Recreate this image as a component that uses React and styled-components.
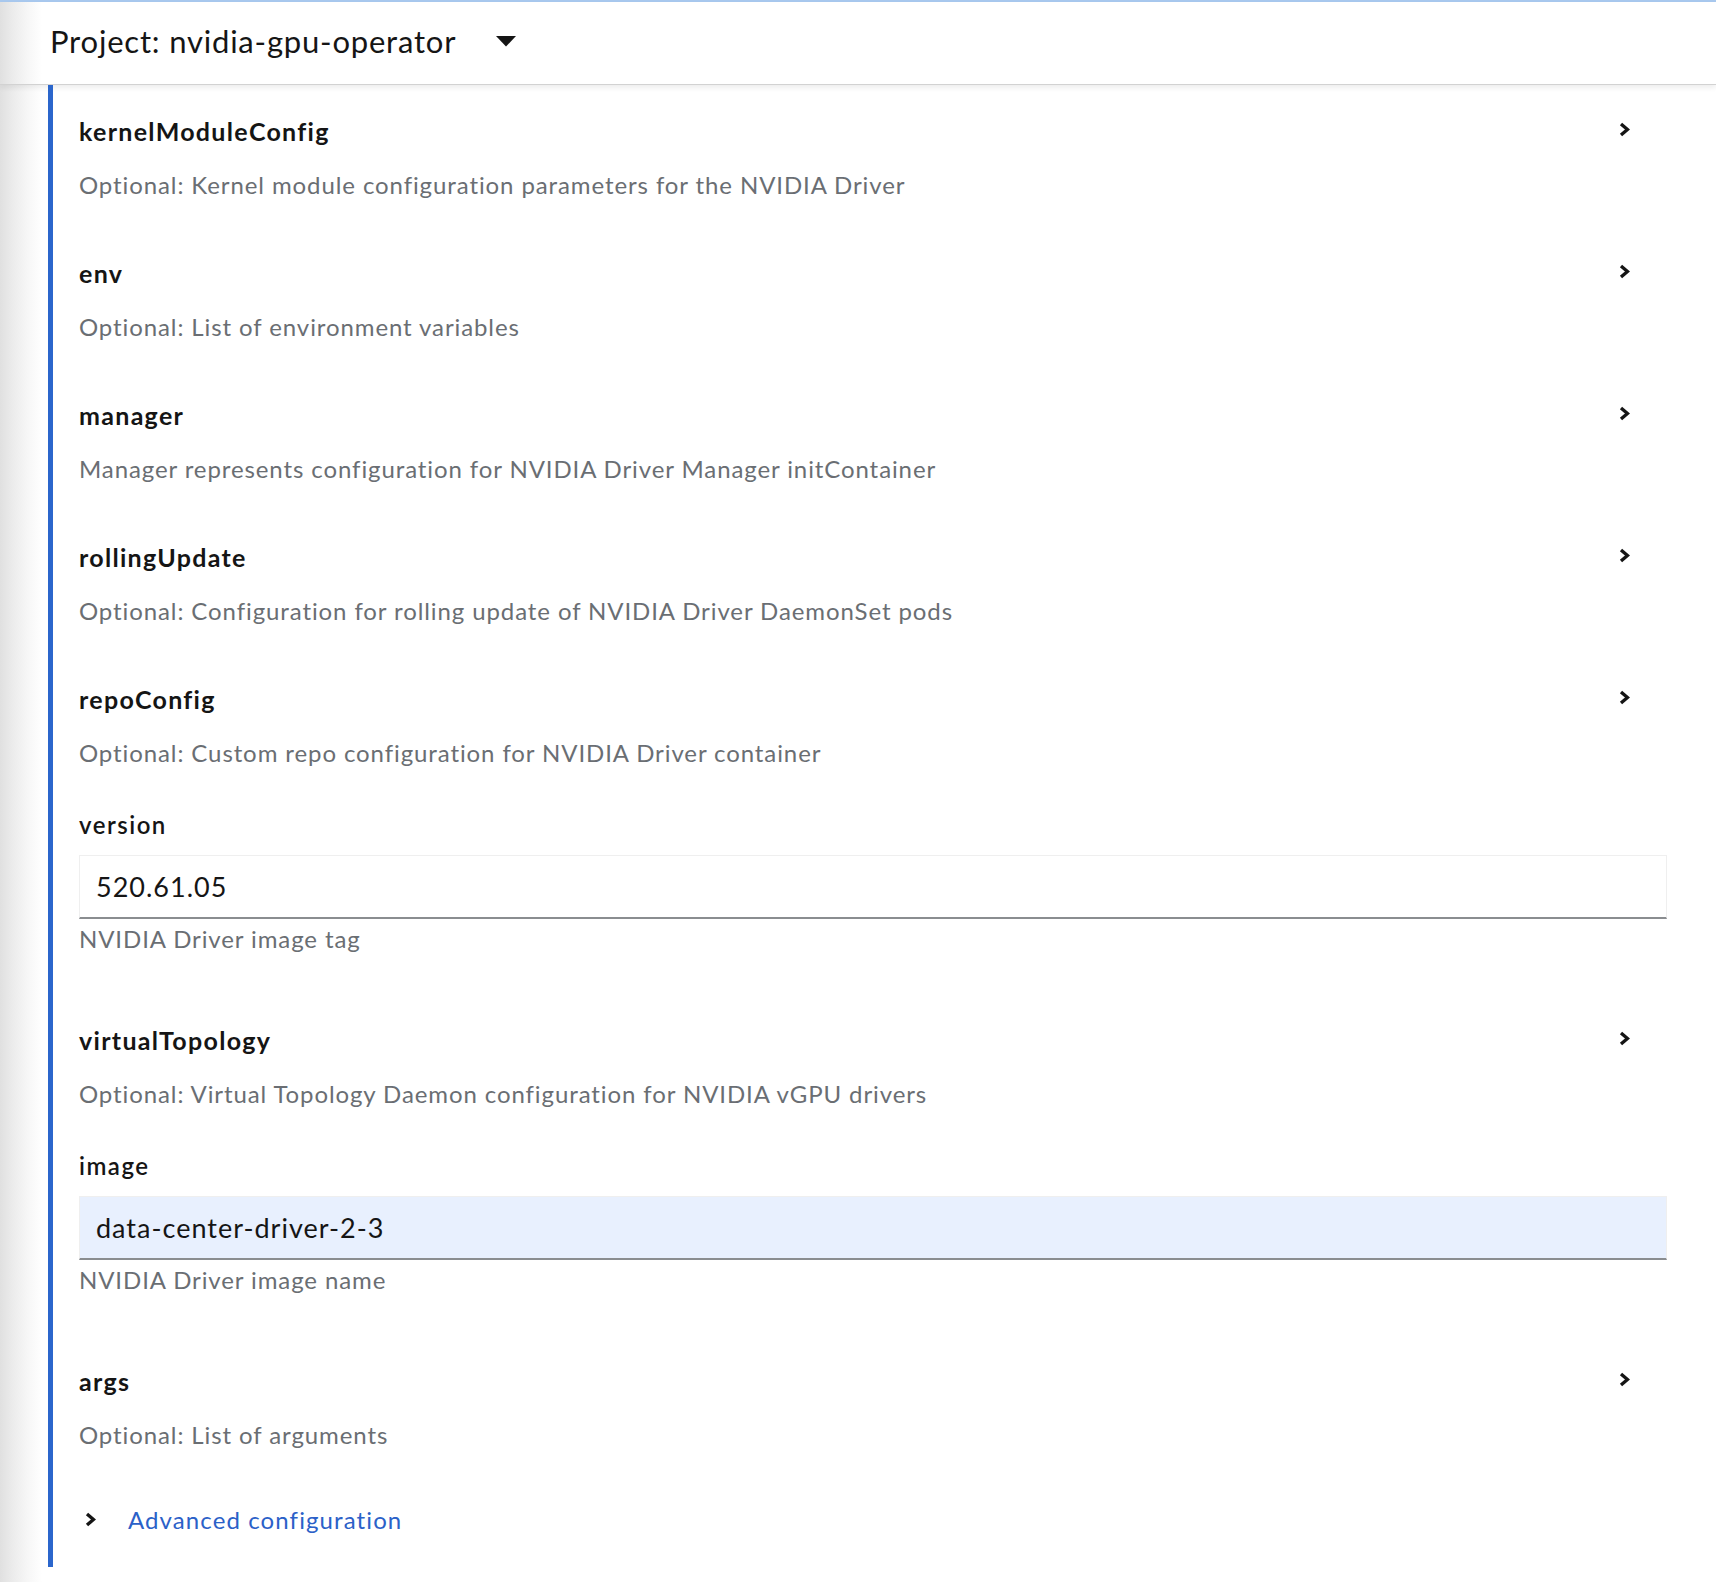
import React from "react";
import styled, { createGlobalStyle } from "styled-components";

const GlobalStyle = createGlobalStyle`
  html, body {
    margin: 0;
    padding: 0;
    background: #fff;
  }
  body {
    font-family: Lato, "Liberation Sans", sans-serif;
    color: #151515;
  }
`;

const fields = [
  { kind: "expand", name: "kernelModuleConfig", desc: "Optional: Kernel module configuration parameters for the NVIDIA Driver" },
  { kind: "expand", name: "env", desc: "Optional: List of environment variables" },
  { kind: "expand", name: "manager", desc: "Manager represents configuration for NVIDIA Driver Manager initContainer" },
  { kind: "expand", name: "rollingUpdate", desc: "Optional: Configuration for rolling update of NVIDIA Driver DaemonSet pods" },
  { kind: "expand", name: "repoConfig", desc: "Optional: Custom repo configuration for NVIDIA Driver container" },
  { kind: "input", name: "version", value: "520.61.05", help: "NVIDIA Driver image tag" },
  { kind: "expand", name: "virtualTopology", desc: "Optional: Virtual Topology Daemon configuration for NVIDIA vGPU drivers" },
  { kind: "input", name: "image", value: "data-center-driver-2-3", help: "NVIDIA Driver image name", autofill: true },
  { kind: "expand", name: "args", desc: "Optional: List of arguments" },
];

function Chevron() {
  return (
    <svg width="11" height="15" viewBox="0 0 11 15">
      <path d="M2 2 L8.5 7.5 L2 13" fill="none" stroke="#151515" strokeWidth="3.4" />
    </svg>
  );
}

function App() {
  return (
    <Page>
      <GlobalStyle />
      <Header>
        <ProjectName>Project: nvidia-gpu-operator</ProjectName>
        <svg width="20" height="11" viewBox="0 0 20 11">
          <polygon points="0,0 20,0 10,10.5" fill="#151515" />
        </svg>
      </Header>
      <Form>
        {fields.map((f) =>
          f.kind === "expand" ? (
            <ExpandGroup key={f.name}>
              <ExpandHeader>
                <FieldTitle>{f.name}</FieldTitle>
                <ToggleIcon>
                  <Chevron />
                </ToggleIcon>
              </ExpandHeader>
              <Description>{f.desc}</Description>
            </ExpandGroup>
          ) : (
            <InputGroup key={f.name}>
              <Label>{f.name}</Label>
              <TextInput $autofill={f.autofill} defaultValue={f.value} />
              <Helper>{f.help}</Helper>
            </InputGroup>
          )
        )}
        <Advanced>
          <Chevron />
          <AdvancedLink>Advanced configuration</AdvancedLink>
        </Advanced>
      </Form>
    </Page>
  );
}

const Page = styled.div`
  min-height: 1582px;
  box-sizing: border-box;
  border-top: 2px solid #a8c8ee;
  background: linear-gradient(90deg, #e0e0e0 0px, #ebebeb 12px, #f7f7f7 28px, #fff 42px);
`;

const Header = styled.header`
  height: 83px;
  box-sizing: border-box;
  display: flex;
  align-items: center;
  gap: 40px;
  padding: 0 0 4px 50px;
  border-bottom: 1px solid #d2d2d2;
  box-shadow: 0 3px 5px rgba(0, 0, 0, 0.07);
`;

const ProjectName = styled.span`
  font-size: 31px;
  letter-spacing: 0.8px;
  color: #151515;
`;

const Form = styled.section`
  margin-left: 48px;
  border-left: 5px solid #2b66cc;
  padding: 12px 49px 30px 26px;
  display: flex;
  flex-direction: column;
  gap: 36px;
`;

const ExpandGroup = styled.div`
  display: flex;
  flex-direction: column;
  gap: 18px;
  padding-top: 16px;
`;

const ExpandHeader = styled.div`
  display: flex;
  align-items: center;
  justify-content: space-between;
  height: 36px;
`;

const FieldTitle = styled.span`
  font-size: 25px;
  font-weight: 700;
  letter-spacing: 1.3px;
  color: #151515;
`;

const ToggleIcon = styled.span`
  display: flex;
  margin: 0 37px 4px 0;
`;

const Description = styled.div`
  font-size: 24px;
  line-height: 36px;
  letter-spacing: 0.9px;
  color: #6a6e73;
`;

const InputGroup = styled.div`
  display: flex;
  flex-direction: column;
  padding-bottom: 13px;
`;

const Label = styled.label`
  font-size: 24px;
  line-height: 36px;
  font-weight: 600;
  letter-spacing: 1.5px;
  color: #151515;
  margin-bottom: 12px;
`;

const TextInput = styled.input`
  height: 64px;
  box-sizing: border-box;
  padding: 0 16px;
  border: 1px solid #efefef;
  border-bottom: 2px solid #8a8d90;
  background: ${(p) => (p.$autofill ? "#e8f0fe" : "#fff")};
  font-family: Lato, "Liberation Sans", sans-serif;
  font-size: 27px;
  letter-spacing: 1px;
  color: #151515;
  outline: none;
`;

const Helper = styled.div`
  margin-top: 2px;
  font-size: 24px;
  line-height: 36px;
  letter-spacing: 0.9px;
  color: #6a6e73;
`;

const Advanced = styled.div`
  display: flex;
  align-items: center;
  gap: 32px;
  padding: 12px 0 0 6px;
  height: 36px;
`;

const AdvancedLink = styled.a`
  font-size: 24px;
  letter-spacing: 1.1px;
  color: #2b61c8;
  cursor: pointer;
`;

export default App;
